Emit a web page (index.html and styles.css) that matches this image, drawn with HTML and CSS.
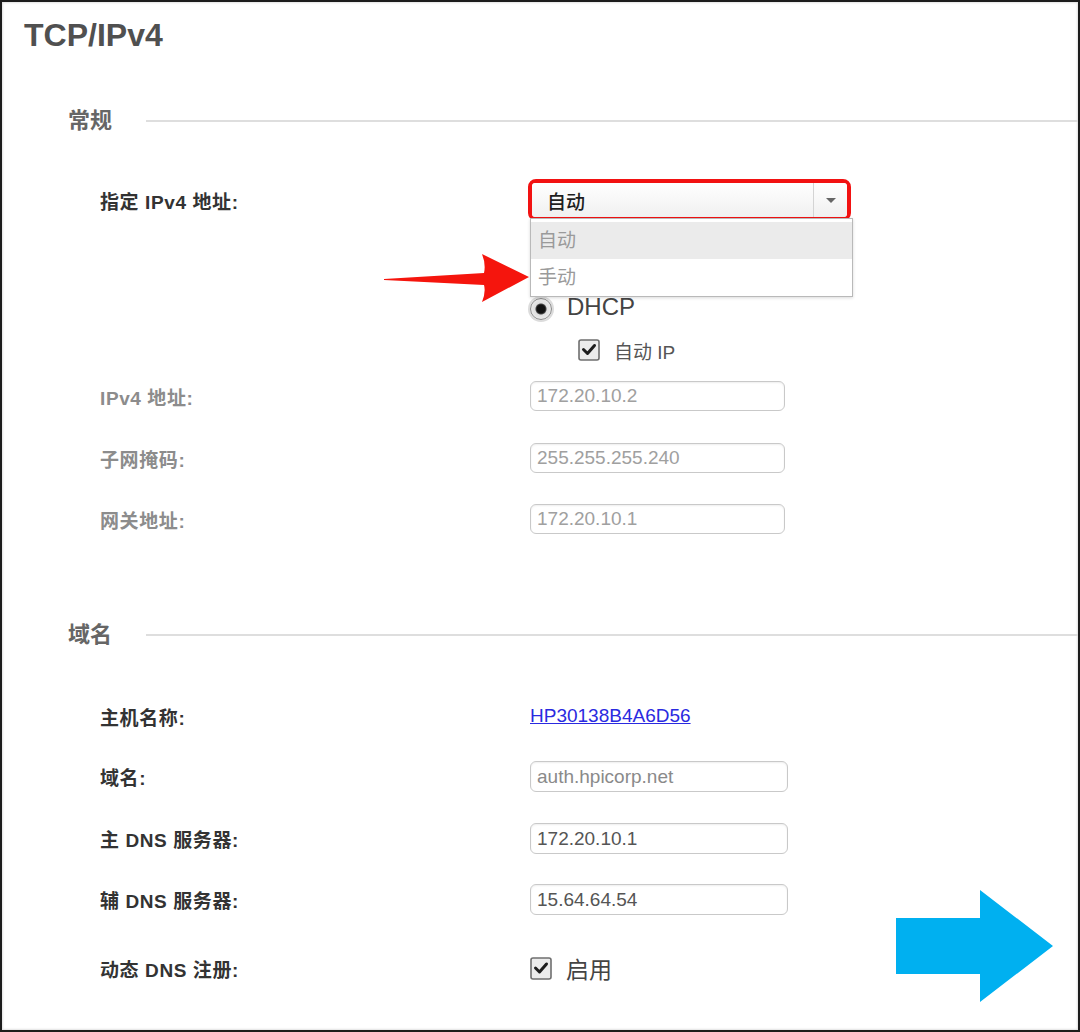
FILE: index.html
```html
<!DOCTYPE html>
<html lang="zh-CN">
<head>
<meta charset="utf-8">
<title>TCP/IPv4</title>
<link rel="stylesheet" href="styles.css">
</head>
<body>
<div class="frame">
  <h1 class="title">TCP/IPv4</h1>

  <div class="section s1">
    <span class="sec-title">常规</span>
    <span class="rule"></span>
  </div>

  <div class="row r-select">
    <span class="label">指定 IPv4 地址:</span>
    <div class="select-hl">
      <div class="select">
        <span class="select-val">自动</span>
        <span class="select-btn"><span class="tri"></span></span>
      </div>
      <ul class="options">
        <li class="opt active">自动</li>
        <li class="opt">手动</li>
      </ul>
    </div>
  </div>

  <div class="row r-dhcp">
    <span class="label"></span>
    <span class="radio"></span>
    <span class="dhcp">DHCP</span>
  </div>

  <div class="row r-autoip">
    <span class="label"></span>
    <span class="check-wrap indent">
      <svg class="check" width="22" height="22" viewBox="0 0 22 22"><rect x="1" y="1" width="20" height="20" rx="2" fill="#ececec" stroke="#6f6f6f" stroke-width="1.6"/><path d="M5.5 10.5 L9.5 14.5 L16.5 6.5" fill="none" stroke="#1e1e1e" stroke-width="3" stroke-linejoin="round" stroke-linecap="round"/></svg>
      <span class="check-text">自动 IP</span>
    </span>
  </div>

  <div class="row r-in1">
    <span class="label off">IPv4 地址:</span>
    <input class="field off" type="text" value="172.20.10.2" readonly>
  </div>
  <div class="row r-in2">
    <span class="label off">子网掩码:</span>
    <input class="field off" type="text" value="255.255.255.240" readonly>
  </div>
  <div class="row r-in3">
    <span class="label off">网关地址:</span>
    <input class="field off" type="text" value="172.20.10.1" readonly>
  </div>

  <div class="section s2">
    <span class="sec-title">域名</span>
    <span class="rule"></span>
  </div>

  <div class="row r-host">
    <span class="label">主机名称:</span>
    <a class="link" href="#">HP30138B4A6D56</a>
  </div>
  <div class="row r-dom">
    <span class="label">域名:</span>
    <input class="field wide soft" type="text" value="auth.hpicorp.net" readonly>
  </div>
  <div class="row r-dns1">
    <span class="label">主 DNS 服务器:</span>
    <input class="field wide" type="text" value="172.20.10.1" readonly>
  </div>
  <div class="row r-dns2">
    <span class="label">辅 DNS 服务器:</span>
    <input class="field wide" type="text" value="15.64.64.54" readonly>
  </div>
  <div class="row r-dyn">
    <span class="label">动态 DNS 注册:</span>
    <span class="check-wrap">
      <svg class="check" width="22" height="23" viewBox="0 0 22 23"><rect x="1" y="1" width="20" height="21" rx="2" fill="#ececec" stroke="#6f6f6f" stroke-width="1.6"/><path d="M5.5 11 L9.5 15 L16.5 7" fill="none" stroke="#1e1e1e" stroke-width="3" stroke-linejoin="round" stroke-linecap="round"/></svg>
      <span class="enable-text">启用</span>
    </span>
  </div>

  <svg class="red-arrow" width="150" height="52" viewBox="0 0 150 52">
    <path d="M2 27 L102 21 Q104 12 100 2 L147 25 L100 50 Q104 40 102 33 L2 28 Z" fill="#f5150d"/>
  </svg>

  <svg class="blue-arrow" width="160" height="116" viewBox="0 0 160 116">
    <polygon points="0,30 84,30 84,2 157,58 84,114 84,86 0,86" fill="#00b0f0"/>
  </svg>
</div>
</body>
</html>
```

FILE: styles.css
```css
html, body {
  margin: 0;
  padding: 0;
  background: #ffffff;
}

body {
  font-family: "Liberation Sans", "Noto Sans CJK SC", sans-serif;
}

.frame {
  position: relative;
  width: 1080px;
  height: 1032px;
  box-sizing: border-box;
  border: 2px solid #1c1c1c;
  box-shadow: inset 0 0 2px 1px rgba(0, 0, 0, 0.12);
  padding: 13px 0 0 22px;
  overflow: hidden;
  display: flex;
  flex-direction: column;
}

.title {
  margin: 0;
  font-size: 32px;
  line-height: 40px;
  font-weight: 700;
  color: #505050;
}

.section {
  display: flex;
  align-items: center;
  height: 30px;
  margin-left: 44px;
}

.sec-title {
  font-size: 22px;
  font-weight: 700;
  color: #666666;
  line-height: 30px;
}

.rule {
  flex: 1;
  height: 2px;
  margin-left: 34px;
  background: #dedede;
}

.s1 { margin-top: 51px; }
.s2 { margin-top: 86px; }

.row {
  display: flex;
  align-items: center;
  padding-left: 76px;
  height: 30px;
}

.label {
  width: 430px;
  flex: none;
  font-size: 19px;
  font-weight: 700;
  letter-spacing: 0.6px;
  color: #333333;
}

.label.off {
  color: #8c8c8c;
}

.r-select { height: 42px; margin-top: 43px; }
.r-dhcp { margin-top: 73px; }
.r-autoip { height: 26px; margin-top: 13px; }
.r-in1 { margin-top: 18px; }
.r-in2 { margin-top: 32px; }
.r-in3 { margin-top: 31px; }
.r-host { margin-top: 51px; }
.r-dom { height: 31px; margin-top: 30px; }
.r-dns1 { height: 31px; margin-top: 31px; }
.r-dns2 { height: 31px; margin-top: 30px; }
.r-dyn { margin-top: 38px; }

/* select */
.select-hl {
  position: relative;
  margin-left: -2px;
  width: 323px;
  height: 42px;
  box-sizing: border-box;
  border: 4px solid #f21212;
  border-radius: 8px;
}

.select {
  display: flex;
  align-items: center;
  height: 100%;
  background: linear-gradient(#ffffff, #f0f0f0);
  border-radius: 3px;
}

.select-val {
  flex: 1;
  padding-left: 15px;
  font-size: 19px;
  font-weight: 500;
  color: #1e1e1e;
}

.select-btn {
  width: 33px;
  height: 100%;
  border-left: 1px solid #d4d4d4;
  display: flex;
  align-items: center;
  justify-content: center;
}

.tri {
  width: 0;
  height: 0;
  border-left: 5px solid transparent;
  border-right: 5px solid transparent;
  border-top: 5px solid #666666;
}

.options {
  position: absolute;
  left: -2px;
  top: 35px;
  width: 323px;
  box-sizing: border-box;
  margin: 0;
  padding: 3px 0 0 0;
  list-style: none;
  background: #ffffff;
  border: 1px solid #b9b9b9;
  box-shadow: 0 1px 3px rgba(0, 0, 0, 0.15);
  z-index: 2;
}

.opt {
  height: 37px;
  line-height: 37px;
  padding-left: 7px;
  font-size: 19px;
  color: #9a9a9a;
}

.opt.active {
  background: #ebebeb;
}

/* radio */
.radio {
  width: 20px;
  height: 20px;
  border-radius: 50%;
  border: 1px solid #8a8a8a;
  box-shadow: 0 0 0 2px #dcdcdc;
  background: radial-gradient(circle, #111111 0 4px, #444444 5px, #dedede 6px, #f4f4f4 100%);
  flex: none;
}

.dhcp {
  margin-left: 15px;
  font-size: 24px;
  color: #444444;
  margin-top: -4px;
}

.check-wrap {
  display: flex;
  align-items: center;
}

.check-wrap.indent {
  margin-left: 48px;
}

.check {
  display: block;
  flex: none;
}

.check-text {
  margin-left: 14px;
  font-size: 19px;
  color: #555555;
}

.enable-text {
  margin-left: 14px;
  font-size: 23px;
  color: #444444;
}

/* fields */
.field {
  box-sizing: border-box;
  width: 255px;
  height: 30px;
  margin: 0;
  padding: 0 0 0 6px;
  border: 1px solid #c9c9c9;
  border-radius: 6px;
  background: #ffffff;
  box-shadow: inset 0 1px 2px rgba(0, 0, 0, 0.07);
  font-family: "Liberation Sans", "Noto Sans CJK SC", sans-serif;
  font-size: 19px;
  color: #555555;
  outline: none;
}

.field.off { color: #a0a0a0; }
.field.soft { color: #8a8a8a; }

.field.wide {
  width: 258px;
  height: 31px;
}

.link {
  font-size: 19px;
  color: #2a2ae0;
  text-decoration: underline;
}

/* annotation arrows */
.red-arrow {
  position: absolute;
  left: 380px;
  top: 250px;
}

.blue-arrow {
  position: absolute;
  left: 894px;
  top: 886px;
}
```
